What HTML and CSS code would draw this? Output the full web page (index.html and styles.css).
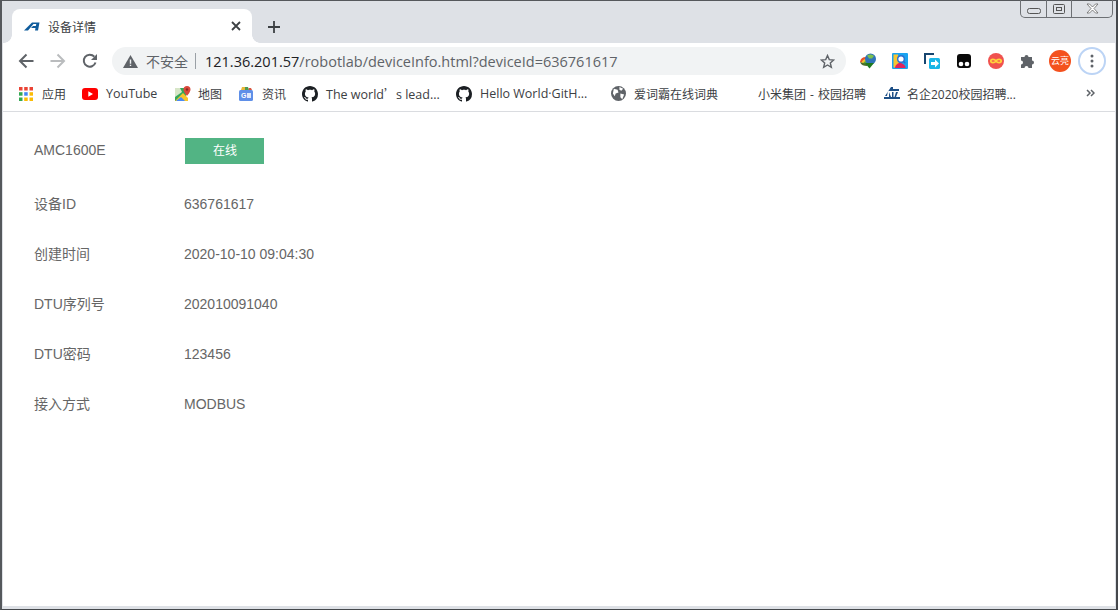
FILE: index.html
```html
<!DOCTYPE html>
<html lang="zh-CN">
<head>
<meta charset="utf-8">
<title>设备详情</title>
<link rel="stylesheet" href="styles.css">
</head>
<body>
<div class="window">
  <div class="winctl">
    <span class="wc wc-min"><svg width="16" height="8" viewBox="0 0 16 8"><rect x="1.5" y="1.5" width="13" height="5" rx="2" fill="none" stroke="#555"/></svg></span>
    <span class="wc wc-max"><svg width="14" height="12" viewBox="0 0 14 12"><rect x="1.5" y="1.5" width="11" height="9" rx="1" fill="none" stroke="#555"/><rect x="4.5" y="4.5" width="5" height="3" fill="none" stroke="#555"/></svg></span>
    <span class="wc wc-close"><svg width="13" height="11" viewBox="0 0 13 11"><path d="M1 1h2.500l3 3 3-3H12L8 5.500 12 10H9.500l-3-3-3 3H1l4-4.500z" fill="#fff" stroke="#666" stroke-width=".8"/></svg></span>
  </div>

  <div class="tabstrip">
    <div class="tab">
      <svg class="favicon" width="16" height="12" viewBox="0 0 16 12"><path d="M0 10.500 8 2.500h7.500l-1.500 8h-3l.5-2.500H7l2-2h2.800l.5-2H9.500L4 10.500z" fill="#0f5c9c"/></svg>
      <span class="tab-title">设备详情</span>
      <svg class="tab-x" width="10" height="10" viewBox="0 0 10 10"><path d="M1 1l8 8M9 1l-8 8" stroke="#3c4043" stroke-width="1.800"/></svg>
    </div>
    <svg class="newtab" width="12" height="12" viewBox="0 0 12 12"><path d="M6 0v12M0 6h12" stroke="#3c4043" stroke-width="1.800"/></svg>
  </div>

  <div class="toolbar">
    <svg class="nav" width="16" height="16" viewBox="0 0 16 16"><path d="M15.500 8H2M8.500 1.500 2 8l6.500 6.500" fill="none" stroke="#5f6368" stroke-width="2"/></svg>
    <svg class="nav" width="16" height="16" viewBox="0 0 16 16"><path d="M.5 8H14M7.500 1.500 14 8l-6.500 6.500" fill="none" stroke="#babcbe" stroke-width="2"/></svg>
    <svg class="nav" width="16" height="16" viewBox="0 0 16 16"><path d="M13.500 9.500A6 6 0 1 1 12.300 3.700" fill="none" stroke="#5f6368" stroke-width="2"/><path d="M15 1v6H9z" fill="#5f6368"/></svg>
    <div class="omnibox">
      <svg class="warn" width="15" height="13" viewBox="0 0 15 13"><path d="M7.500 0 15 13H0z" fill="#5f6368"/><path d="M6.800 4.500h1.400v4.200H6.800zM6.800 9.700h1.400v1.400H6.800z" fill="#f1f3f4"/></svg>
      <span class="insecure">不安全</span>
      <span class="sep"></span>
      <span class="url"><span class="host">121.36.201.57</span>/robotlab/deviceInfo.html?deviceId=636761617</span>
      <svg class="star" width="15" height="15" viewBox="0 0 16 16"><path d="M8 1.600 9.900 6l4.700.4-3.600 3.100 1.100 4.700L8 11.700l-4.100 2.500L5 9.500 1.400 6.400 6.100 6z" fill="none" stroke="#5f6368" stroke-width="1.500"/></svg>
    </div>
    <div class="exts">
      <svg class="ext" width="17" height="16" viewBox="0 0 17 16"><path d="M0 9a6 6 0 0 1 6-5l1 7z" fill="#e8502a"/><path d="M1.500 10a5 5 0 0 1 5-4l1 5z" fill="#f2c230"/><path d="M3 11a4 4 0 0 1 4-3l1 4z" fill="#5aa83a"/><path d="M0 9c1 3 4 4 7 4l1-2-5-1z" fill="#4a6e2a"/><circle cx="10.500" cy="6" r="5.500" fill="#2f73b8"/><path d="M7 2.500c2-1.500 5-1.500 7 .5l-2 2.500H9z" fill="#7cc04e"/><path d="M5 10h9l-4.500 5.500z" fill="#1f7a1f"/></svg>
      <svg class="ext" width="16" height="16" viewBox="0 0 16 16"><rect width="16" height="16" rx="1" fill="#1aa3f0"/><path d="M1.500 1.500H6l1 9-1 4H1.500z" fill="#f7c531"/><path d="M3 15c0-3 3-5 5-5s5 2 5.500 4v1z" fill="#e0245e"/><circle cx="9" cy="6" r="3.300" fill="#fff" stroke="#2a6fd0" stroke-width="1.400"/><path d="M11.300 8.300l2 2" stroke="#2a6fd0" stroke-width="1.400"/></svg>
      <svg class="ext" width="16" height="16" viewBox="0 0 16 16"><path d="M1 11V1h9" fill="none" stroke="#17456f" stroke-width="2"/><rect x="5" y="5" width="11" height="11" rx="1.500" fill="#19b5e6"/><path d="M7 9h4V6.500l4 4-4 4V12H7z" fill="#fff"/></svg>
      <svg class="ext" width="16" height="16" viewBox="0 0 16 16"><rect x="1" y="1" width="14" height="14" rx="3" fill="#0a0a0a"/><circle cx="5" cy="11" r="2.300" fill="#fff"/><circle cx="11" cy="11" r="2.300" fill="#fff"/></svg>
      <svg class="ext" width="16" height="16" viewBox="0 0 16 16"><circle cx="8" cy="8" r="8" fill="#f0524f"/><path d="M8 8C6.500 5.800 2.800 6 2.800 8s3.700 2.200 5.200 0c1.500-2.200 5.200-2 5.200 0s-3.700 2.200-5.200 0z" fill="none" stroke="#ffd23c" stroke-width="1.800"/></svg>
      <svg class="ext" width="16" height="16" viewBox="0 0 16 16"><path d="M1 5h3.500a2 2 0 1 1 4 0H12v3.500a2 2 0 1 1 0 4V16H8.500a2 2 0 1 0-4 0H1v-3.500a2 2 0 1 0 0-4z" fill="#5f6368" transform="translate(0 -1)"/></svg>
      <span class="avatar">云亮</span>
      <span class="menu"><svg width="4" height="14" viewBox="0 0 4 14"><circle cx="2" cy="2" r="1.500" fill="#5f6368"/><circle cx="2" cy="7" r="1.500" fill="#5f6368"/><circle cx="2" cy="12" r="1.500" fill="#5f6368"/></svg></span>
    </div>
  </div>

  <div class="bookmarks">
    <span class="bm bm-apps">
      <svg width="14" height="14" viewBox="0 0 14 14"><rect width="3.500" height="3.500" fill="#ea4335"/><rect x="5.200" width="3.500" height="3.500" fill="#ea4335"/><rect x="10.500" width="3.500" height="3.500" fill="#ea4335"/><rect y="5.200" width="3.500" height="3.500" fill="#34a853"/><rect x="5.200" y="5.200" width="3.500" height="3.500" fill="#4285f4"/><rect x="10.500" y="5.200" width="3.500" height="3.500" fill="#fbbc05"/><rect y="10.500" width="3.500" height="3.500" fill="#34a853"/><rect x="5.200" y="10.500" width="3.500" height="3.500" fill="#fbbc05"/><rect x="10.500" y="10.500" width="3.500" height="3.500" fill="#fbbc05"/></svg>
      <span>应用</span>
    </span>
    <span class="bm bm-yt">
      <svg width="16" height="12" viewBox="0 0 16 12"><rect width="16" height="12" rx="3" fill="#f00"/><path d="M6.300 3.300v5.400L11 6z" fill="#fff"/></svg>
      <span class="latin">YouTube</span>
    </span>
    <span class="bm bm-map">
      <svg width="16" height="16" viewBox="0 0 16 16"><path d="M0 2h11v13H0z" fill="#35a85a"/><path d="M0 2h5l2 4-7 5z" fill="#d7e6c8"/><path d="M0 15 8 7l5 5v3z" fill="#f7c52b"/><path d="M1 15l5-4 4 4z" fill="#4a8af4"/><path d="M12 0a3.500 3.500 0 0 1 3.500 3.500C15.500 6 12 10 12 10S8.500 6 8.500 3.500A3.500 3.500 0 0 1 12 0z" fill="#d9483b"/><circle cx="12" cy="3.500" r="1.200" fill="#8a2a22"/></svg>
      <span>地图</span>
    </span>
    <span class="bm bm-news">
      <svg width="14" height="14" viewBox="0 0 14 14"><rect y="3" width="14" height="11" rx="1.500" fill="#5f8fe8"/><path d="M2 3l1-3h3v3z" fill="#e9b83a"/><path d="M6 3V0h3l1 3z" fill="#4d9a55"/><path d="M10 3 9.500 1H12l1 2z" fill="#d9553f"/><text class="g-text" x="2" y="11">G</text><rect x="8" y="6" width="4" height="5" fill="#dce7fb"/></svg>
      <span>资讯</span>
    </span>
    <span class="bm bm-gh1">
      <svg width="16" height="16" viewBox="0 0 16 16"><path fill="#1b1f23" d="M8 0C3.580 0 0 3.580 0 8c0 3.540 2.290 6.530 5.470 7.590.4.070.55-.17.550-.38 0-.19-.01-.82-.01-1.490-2.010.37-2.530-.49-2.690-.94-.09-.23-.48-.94-.82-1.130-.28-.15-.68-.52-.01-.53.630-.01 1.080.58 1.230.82.720 1.210 1.870.87 2.330.66.070-.52.280-.87.510-1.070-1.780-.2-3.640-.89-3.640-3.950 0-.87.310-1.590.82-2.150-.08-.2-.36-1.020.08-2.120 0 0 .67-.21 2.200.82.640-.18 1.320-.27 2-.27s1.360.09 2 .27c1.530-1.040 2.200-.82 2.200-.82.440 1.100.16 1.920.08 2.120.51.560.82 1.270.82 2.150 0 3.070-1.870 3.750-3.650 3.950.29.250.54.730.54 1.480 0 1.070-.01 1.930-.01 2.200 0 .21.150.46.550.38A8.010 8.010 0 0 0 16 8c0-4.420-3.580-8-8-8z"/></svg>
      <span class="latin">The world<span class="apos">’</span>s lead...</span>
    </span>
    <span class="bm bm-gh2">
      <svg width="16" height="16" viewBox="0 0 16 16"><path fill="#1b1f23" d="M8 0C3.580 0 0 3.580 0 8c0 3.540 2.290 6.530 5.470 7.590.4.070.55-.17.550-.38 0-.19-.01-.82-.01-1.490-2.010.37-2.530-.49-2.690-.94-.09-.23-.48-.94-.82-1.130-.28-.15-.68-.52-.01-.53.630-.01 1.080.58 1.230.82.720 1.210 1.870.87 2.330.66.070-.52.280-.87.510-1.070-1.780-.2-3.640-.89-3.640-3.950 0-.87.310-1.590.82-2.150-.08-.2-.36-1.020.08-2.120 0 0 .67-.21 2.200.82.640-.18 1.320-.27 2-.27s1.360.09 2 .27c1.530-1.040 2.200-.82 2.200-.82.440 1.100.16 1.920.08 2.120.51.560.82 1.270.82 2.150 0 3.070-1.870 3.750-3.650 3.950.29.250.54.730.54 1.480 0 1.070-.01 1.930-.01 2.200 0 .21.150.46.550.38A8.010 8.010 0 0 0 16 8c0-4.420-3.580-8-8-8z"/></svg>
      <span class="latin">Hello World·GitH...</span>
    </span>
    <span class="bm bm-globe">
      <svg width="15" height="15" viewBox="0 0 16 16"><circle cx="8" cy="8" r="8" fill="#5f6368"/><path d="M3 3l4 1 1 3-3 1-1 3-2-3zM10 8l4 1-2 5-2-2zM9 1l4 2-2 2-2-1z" fill="#fff"/></svg>
      <span>爱词霸在线词典</span>
    </span>
    <span class="bm bm-mi"><span class="mi-text">小米集团 - 校园招聘</span></span>
    <span class="bm bm-ying">
      <svg width="16" height="13" viewBox="0 0 16 13"><path d="M7 0h2v2h6v2H4L3 9H1zM5 5l2 5H5zM8 5h1.500v5H8zM12 5h2l-2 5h-1.500zM0 10h16v2H0z" fill="#1d4f86"/></svg>
      <span>名企2020校园招聘...</span>
    </span>
    <svg class="more" width="9" height="8" viewBox="0 0 9 8"><path d="M1 1l3 3-3 3M5 1l3 3-3 3" fill="none" stroke="#5f6368" stroke-width="1.500"/></svg>
  </div>

  <main class="content">
    <div class="row row-first">
      <span class="label">AMC1600E</span>
      <span class="badge">在线</span>
    </div>
    <div class="row"><span class="label">设备ID</span><span class="value">636761617</span></div>
    <div class="row"><span class="label">创建时间</span><span class="value">2020-10-10 09:04:30</span></div>
    <div class="row"><span class="label">DTU序列号</span><span class="value">202010091040</span></div>
    <div class="row"><span class="label">DTU密码</span><span class="value">123456</span></div>
    <div class="row"><span class="label">接入方式</span><span class="value">MODBUS</span></div>
  </main>
</div>
</body>
</html>
```
FILE: styles.css
```css
* { box-sizing: border-box; }
html, body { margin: 0; height: 100%; overflow: hidden; background: #fff; }
body { font-family: "Open Sans", "Noto Sans CJK SC", sans-serif; }
svg { display: block; flex: none; }

.window {
  position: relative;
  height: 610px;
  display: flex;
  flex-direction: column;
  border-top: 1px solid #55585c;
  border-left: 2px solid #55585c;
  border-right: 2px solid #45484c;
  border-bottom: 1px solid #45484c;
  padding: 0 1px 3px 1px;
  background: #dee1e6;
}

.winctl {
  position: absolute;
  top: -1px;
  right: 3px;
  width: 93px;
  height: 18px;
  display: flex;
  border: 1px solid #6d7074;
  border-top: 0;
  border-radius: 0 0 5px 5px;
}
.wc { display: flex; align-items: center; justify-content: center; height: 100%; }
.wc + .wc { border-left: 1px solid #6d7074; }
.wc-min { width: 25px; }
.wc-min svg { margin-top: 5px; }
.wc-max { width: 25px; }
.wc-close { flex: 1; }

.tabstrip {
  height: 42px;
  flex: none;
  background: #dee1e6;
  display: flex;
  align-items: flex-end;
  padding-left: 9px;
}
.tab {
  position: relative;
  width: 240px;
  height: 34px;
  background: #fff;
  border-radius: 8px 8px 0 0;
  display: flex;
  align-items: center;
  padding: 0 11px 0 12px;
}
.tab::before, .tab::after {
  content: "";
  position: absolute;
  bottom: 0;
  width: 8px;
  height: 8px;
}
.tab::before { left: -8px; background: radial-gradient(circle at 0 0, #dee1e6 7.500px, #fff 8px); }
.tab::after { right: -8px; background: radial-gradient(circle at 100% 0, #dee1e6 7.500px, #fff 8px); }
.favicon { margin-top: -1px; }
.tab-title {
  flex: 1;
  margin-left: 8px;
  margin-top: 2px;
  font-size: 12px;
  color: #3c4043;
}
.newtab { margin: 0 0 10px 16px; }

.toolbar {
  height: 35px;
  flex: none;
  display: flex;
  align-items: center;
  padding: 0 3px 0 15px;
  background: #fff;
}
.nav { margin-right: 16px; }
.omnibox {
  width: 734px;
  height: 28px;
  margin-left: -2px;
  margin-top: 1px;
  border-radius: 14px;
  background: #f1f3f4;
  display: flex;
  align-items: center;
  padding: 0 11px;
}
.warn { margin-right: 8px; }
.insecure { font-size: 14px; color: #5f6368; }
.sep { width: 1px; height: 16px; background: #9aa0a6; margin: 0 9px 0 7px; }
.url { flex: 1; font-size: 14.500px; color: #5f6368; white-space: nowrap; }
.host { color: #202124; }

.exts { display: flex; align-items: center; margin-left: 14px; }
.ext { margin-right: 16px; }
.ext:first-child { margin-right: 15px; }
.avatar {
  width: 22px;
  height: 22px;
  border-radius: 50%;
  background: #f4511e;
  color: #fff;
  font-size: 9px;
  text-align: center;
  line-height: 22px;
  margin-left: -3px;
}
.menu {
  width: 28px;
  height: 28px;
  margin-left: 7px;
  border: 2px solid #bcd4f5;
  border-radius: 50%;
  display: flex;
  align-items: center;
  justify-content: center;
}

.bookmarks {
  height: 34px;
  flex: none;
  display: flex;
  align-items: center;
  border-bottom: 1px solid #dadce0;
  background: #fff;
  font-size: 12px;
  color: #3c4043;
  white-space: nowrap;
  padding: 0 0 2px 16px;
}
.bm { display: inline-flex; align-items: center; gap: 8px; flex: none; }
.bm-apps { width: 63px; gap: 9px; }
.bm-yt { width: 93px; }
.bm-map { width: 64px; gap: 7px; }
.bm-news { width: 63px; gap: 9px; }
.bm-gh1 { width: 154px; }
.bm-gh2 { width: 155px; }
.bm-globe { width: 147px; }
.bm-mi { width: 126px; }
.bm-ying { width: 202px; gap: 7px; }
.latin { font-size: 12.500px; }
.apos { font-family: "Noto Sans CJK SC", sans-serif; font-size: 12px; }
.mi-text { word-spacing: 1px; }
.more { margin-top: -1px; }
.g-text { font-size: 7px; font-weight: 700; fill: #fff; font-family: "Liberation Sans", sans-serif; }

.content {
  flex: 1;
  background: #fff;
  padding: 26px 0 0 31px;
  font-family: "Liberation Sans", "Noto Sans CJK SC", sans-serif;
  font-size: 14px;
  color: #666;
}
.row {
  display: flex;
  align-items: center;
  height: 50px;
}
.row-first {
  height: 26px;
  margin-bottom: 15px;
}
.label { width: 150px; flex: none; line-height: 20px; }
.row-first .label { margin-top: -2px; }
.value { line-height: 20px; }
.badge {
  width: 79px;
  height: 26px;
  margin-left: 1px;
  padding-left: 1px;
  background: #52b484;
  color: #fff;
  font-size: 12px;
  line-height: 26px;
  text-align: center;
}
```
